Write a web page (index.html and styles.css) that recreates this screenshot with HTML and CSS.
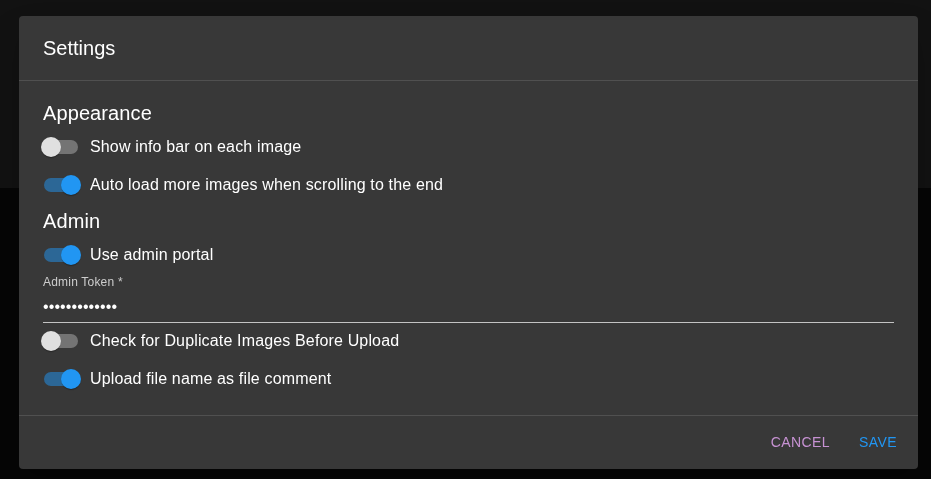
FILE: index.html
```html
<!DOCTYPE html>
<html lang="en">
<head>
<meta charset="utf-8">
<title>Settings</title>
<link rel="stylesheet" href="styles.css">
</head>
<body>
<div class="app-bar"></div>
<div class="backdrop">
  <div class="dialog">
    <div class="dialog-title">Settings</div>
    <div class="dialog-content">
      <div class="section-title">Appearance</div>
      <label class="row">
        <span class="switch"><span class="track"></span><span class="thumb"></span></span>
        <span class="row-label">Show info bar on each image</span>
      </label>
      <label class="row">
        <span class="switch on"><span class="track"></span><span class="thumb"></span></span>
        <span class="row-label">Auto load more images when scrolling to the end</span>
      </label>
      <div class="section-title">Admin</div>
      <label class="row">
        <span class="switch on"><span class="track"></span><span class="thumb"></span></span>
        <span class="row-label">Use admin portal</span>
      </label>
      <div class="field">
        <div class="field-label">Admin Token *</div>
        <div class="field-input"><input type="password" value="abcdefghijklm" readonly></div>
      </div>
      <label class="row">
        <span class="switch"><span class="track"></span><span class="thumb"></span></span>
        <span class="row-label">Check for Duplicate Images Before Upload</span>
      </label>
      <label class="row">
        <span class="switch on"><span class="track"></span><span class="thumb"></span></span>
        <span class="row-label">Upload file name as file comment</span>
      </label>
    </div>
    <div class="dialog-actions">
      <button class="btn btn-cancel">Cancel</button>
      <button class="btn btn-save">Save</button>
    </div>
  </div>
</div>
</body>
</html>
```
FILE: styles.css
```css
html, body {
  margin: 0;
  padding: 0;
}
body {
  background: #060606;
  font-family: "Liberation Sans", Arial, sans-serif;
  color: #fff;
  height: 479px;
  overflow: hidden;
}
.app-bar {
  height: 188px;
  background: #121212;
}
.backdrop {
  position: fixed;
  inset: 0;
  display: flex;
  align-items: flex-start;
  padding: 16px 0 0 19px;
}
.dialog {
  width: 899px;
  background: #383838;
  border-radius: 4px;
  box-shadow: 0 11px 15px -7px rgba(0,0,0,0.2), 0 24px 38px 3px rgba(0,0,0,0.14);
  display: flex;
  flex-direction: column;
}
.dialog-title {
  padding: 16px 24px;
  font-size: 20px;
  line-height: 32px;
  color: #fff;
}
.dialog-content {
  border-top: 1px solid rgba(255,255,255,0.12);
  border-bottom: 1px solid rgba(255,255,255,0.12);
  padding: 16px 24px 16px;
  display: flex;
  flex-direction: column;
}
.section-title {
  font-size: 20px;
  line-height: 32px;
  letter-spacing: 0.1px;
}
.row {
  display: flex;
  align-items: center;
  margin-left: -11px;
  height: 38px;
  cursor: pointer;
}
.row-label {
  font-size: 16px;
  line-height: 24px;
  letter-spacing: 0.15px;
  margin-top: -2px;
}
.switch {
  position: relative;
  width: 58px;
  height: 38px;
  flex: none;
  top: -1px;
}
.track {
  position: absolute;
  left: 12px;
  top: 12px;
  width: 34px;
  height: 14px;
  border-radius: 7px;
  background: #747474;
}
.thumb {
  position: absolute;
  left: 9px;
  top: 9px;
  width: 20px;
  height: 20px;
  border-radius: 50%;
  background: #e0e0e0;
  box-shadow: 0 2px 1px -1px rgba(0,0,0,0.2), 0 1px 1px 0 rgba(0,0,0,0.14);
}
.switch.on .track {
  background: #2c6796;
}
.switch.on .thumb {
  left: 29px;
  background: #2196f3;
}
.field {
  display: flex;
  flex-direction: column;
}
.field-label {
  font-size: 12px;
  line-height: 14px;
  color: #cdcdcd;
  letter-spacing: 0.2px;
}
.field-input {
  margin-top: 2px;
  border-bottom: 1px solid #c3c3c3;
  height: 31px;
  display: flex;
  align-items: center;
}
.field-input input {
  background: transparent;
  border: 0;
  outline: none;
  padding: 0;
  margin: 0;
  width: 100%;
  color: #fff;
  font-family: "Liberation Sans", Arial, sans-serif;
  font-size: 16px;
  letter-spacing: 0.1px;
  height: 24px;
}
.dialog-actions {
  display: flex;
  justify-content: flex-end;
  gap: 8px;
  padding: 8px 8px 9px;
}
.btn {
  background: transparent;
  border: 0;
  font-family: "Liberation Sans", Arial, sans-serif;
  font-size: 14px;
  text-transform: uppercase;
  letter-spacing: 0.4px;
  padding: 6px 8px;
  min-width: 64px;
  height: 36px;
  border-radius: 4px;
  cursor: pointer;
}
.btn-cancel {
  color: #c792d3;
}
.btn-save {
  color: #2196f3;
}
```
